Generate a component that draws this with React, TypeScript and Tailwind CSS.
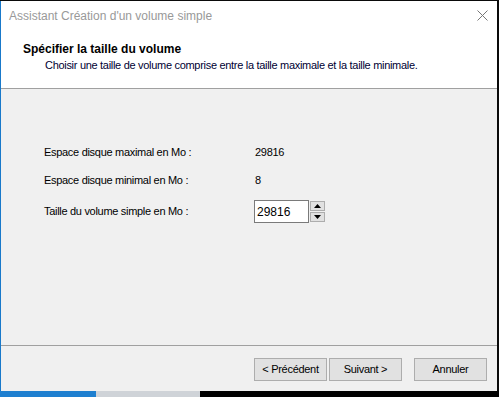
import React from 'react';

const FONT = { fontFamily: '"Liberation Sans", Arial, sans-serif' };

function SpinButton({ up }: { up?: boolean }) {
  return (
    <div className="flex h-[10px] w-[15px] items-center justify-center border border-[#adadad] bg-[#e1e1e1]">
      <svg width="7" height="4" viewBox="0 0 7 4">
        {up ? <polygon points="3.5,0 7,4 0,4" fill="#000" /> : <polygon points="0,0 7,0 3.5,4" fill="#000" />}
      </svg>
    </div>
  );
}

function Button({ label }: { label: string }) {
  return (
    <button className="flex h-[23px] w-[73px] items-center justify-center border border-[#adadad] bg-[#e1e1e1] text-[11px] tracking-[-0.3px] text-black">
      {label}
    </button>
  );
}

export default function App() {
  return (
    <div className="relative h-[397px] w-[499px] overflow-hidden bg-[#0a0a0a]" style={FONT}>
      {/* desktop strip below the window */}
      <div className="absolute bottom-0 left-0 flex h-[6px] w-full">
        <div className="w-[96px] bg-[#1e7fd0]" />
        <div className="w-[104px] bg-[#cfd3d8]" />
        <div className="flex-1 bg-black" />
      </div>
      <div className="absolute left-0 top-[1px] flex h-[390px] w-[497px] flex-col border-l border-[#1979ca] bg-[#f0f0f0]">
        <div className="flex h-[29px] items-center justify-between bg-white pl-[8px] pr-[9px]">
          <span className="text-[12px] text-[#999999]">Assistant Création d'un volume simple</span>
          <svg width="11" height="11" viewBox="0 0 11 11">
            <path d="M0.5 0.5 L10.5 10.5 M10.5 0.5 L0.5 10.5" stroke="#777" strokeWidth="1" />
          </svg>
        </div>
        <div className="h-[59px] border-b border-[#a0a0a0] bg-white pl-[22px] pt-[12px]">
          <div className="text-[12px] font-bold leading-[14px] text-black">Spécifier la taille du volume</div>
          <div className="mt-[2px] pl-[22px] text-[11px] leading-[14px] tracking-[-0.3px] text-[#000033]">
            Choisir une taille de volume comprise entre la taille maximale et la taille minimale.
          </div>
        </div>
        <div className="flex flex-1 flex-col">
          <div className="flex-1 pl-[43px] pt-[56px] text-[11px] tracking-[-0.3px] text-black">
            <div className="flex h-[14px] items-center">
              <span className="w-[211px]">Espace disque maximal en Mo :</span>
              <span>29816</span>
            </div>
            <div className="mt-[14px] flex h-[14px] items-center">
              <span className="w-[211px]">Espace disque minimal en Mo :</span>
              <span>8</span>
            </div>
            <div className="mt-[13px] flex items-center">
              <span className="w-[210px]">Taille du volume simple en Mo :</span>
              <div className="flex h-[23px] w-[55px] items-center border border-[#7a7a7a] bg-white pl-[2px] text-[12px] tracking-normal">29816</div>
              <div className="ml-[1px] flex flex-col gap-[1px]">
                <SpinButton up />
                <SpinButton />
              </div>
            </div>
          </div>
          <div className="h-[46px] border-t border-[#a0a0a0] pr-[10px] pt-[12px]">
            <div className="flex justify-end">
              <Button label="< Précédent" />
              <div className="ml-[2px]">
                <Button label="Suivant >" />
              </div>
              <div className="ml-[12px]">
                <Button label="Annuler" />
              </div>
            </div>
          </div>
        </div>
      </div>
    </div>
  );
}
